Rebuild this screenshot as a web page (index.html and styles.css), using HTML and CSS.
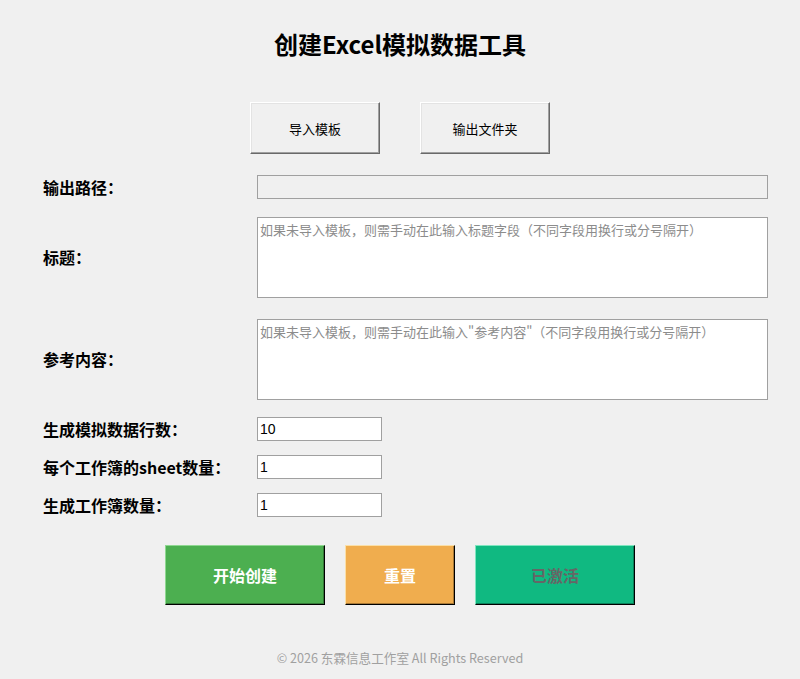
FILE: index.html
```html
<!DOCTYPE html>
<html lang="zh-CN">
  <head>
    <meta charset="UTF-8" />
    <meta name="viewport" content="width=device-width, initial-scale=1.0" />
    <title>创建Excel模拟数据工具</title>
    <link rel="stylesheet" href="styles.css">
  </head>
  <body>
    <div class="app">
      <h1>创建Excel模拟数据工具</h1>

      <div class="toolbar">
        <button class="tk-btn" type="button">导入模板</button>
        <button class="tk-btn" type="button">输出文件夹</button>
      </div>

      <form class="form">
        <label for="out-path">输出路径：</label>
        <input id="out-path" class="entry entry-readonly" type="text" readonly />

        <label for="headers">标题：</label>
        <textarea id="headers" class="area" placeholder="如果未导入模板，则需手动在此输入标题字段（不同字段用换行或分号隔开）"></textarea>

        <label for="refs">参考内容：</label>
        <textarea id="refs" class="area" placeholder="如果未导入模板，则需手动在此输入&quot;参考内容&quot;（不同字段用换行或分号隔开）"></textarea>

        <label for="rows">生成模拟数据行数：</label>
        <input id="rows" class="entry entry-small" type="text" value="10" />

        <label for="sheets">每个工作簿的sheet数量：</label>
        <input id="sheets" class="entry entry-small" type="text" value="1" />

        <label for="books">生成工作簿数量：</label>
        <input id="books" class="entry entry-small" type="text" value="1" />
      </form>

      <div class="actions">
        <button class="act-btn act-start" type="button">开始创建</button>
        <button class="act-btn act-reset" type="button">重置</button>
        <button class="act-btn act-active" type="button">已激活</button>
      </div>

      <p class="footer">© 2026 东霖信息工作室 All Rights Reserved</p>
    </div>
  </body>
</html>
```

FILE: styles.css
```css
body {
  margin: 0;
  padding: 0;
  background-color: #f0f0f0;
  font-family: "Noto Sans CJK SC", "Noto Sans", sans-serif;
  color: #000;
}

.app {
  width: 800px;
  height: 679px;
  box-sizing: border-box;
  padding-top: 28px;
}

h1 {
  margin: 0;
  font-size: 24px;
  line-height: 32px;
  font-weight: bold;
  text-align: center;
}

.toolbar {
  display: flex;
  justify-content: center;
  gap: 40px;
  margin-top: 42px;
}

.tk-btn {
  width: 130px;
  height: 52px;
  padding: 0;
  font-family: inherit;
  font-size: 13px;
  color: #000;
  background-color: #f0f0f0;
  border: 1px solid;
  border-color: #ffffff #696969 #696969 #ffffff;
  box-shadow: inset -1px -1px 0 #a0a0a0, inset 1px 1px 0 #e3e3e3;
  cursor: pointer;
}

.form {
  display: grid;
  grid-template-columns: 214px 511px;
  row-gap: 14px;
  align-items: center;
  margin: 21px 0 0 43px;
}

.form label {
  font-size: 16px;
  font-weight: bold;
}

.entry,
.area {
  box-sizing: border-box;
  border: 1px solid #a0a0a0;
  background-color: #ffffff;
  font-family: "Liberation Sans", "Noto Sans CJK SC", sans-serif;
  font-size: 14px;
  color: #000;
  outline: none;
}

.entry {
  height: 24px;
  padding: 0 2px;
}

.entry-readonly {
  width: 511px;
  background-color: #f0f0f0;
}

.entry-small {
  width: 125px;
}

.area {
  width: 511px;
  height: 81px;
  margin: 4px 0 3px;
  padding: 2px 2px;
  resize: none;
  font-family: "Noto Sans CJK SC", sans-serif;
  font-size: 13px;
  line-height: 20px;
}

.area::placeholder {
  color: #8c8c8c;
}

.actions {
  display: flex;
  justify-content: center;
  gap: 20px;
  margin-top: 28px;
}

.act-btn {
  width: 160px;
  height: 60px;
  padding: 0;
  font-family: inherit;
  font-size: 16px;
  font-weight: bold;
  color: #ffffff;
  border: 1px solid;
  cursor: pointer;
}

.act-start {
  background-color: #4caf50;
  border-color: #8fd891 #000 #000 #8fd891;
  box-shadow: inset -1px -1px 0 #357a38;
}

.act-reset {
  width: 110px;
  background-color: #f0ad4e;
  border-color: #fbe0a8 #000 #000 #fbe0a8;
  box-shadow: inset -1px -1px 0 #a87936;
}

.act-active {
  background-color: #10b981;
  color: #666666;
  border-color: #7fe6c0 #000 #000 #7fe6c0;
  box-shadow: inset -1px -1px 0 #0b815a;
}

.footer {
  margin: 43px 0 0;
  text-align: center;
  font-size: 12.6px;
  color: #a0a0a0;
}
```
